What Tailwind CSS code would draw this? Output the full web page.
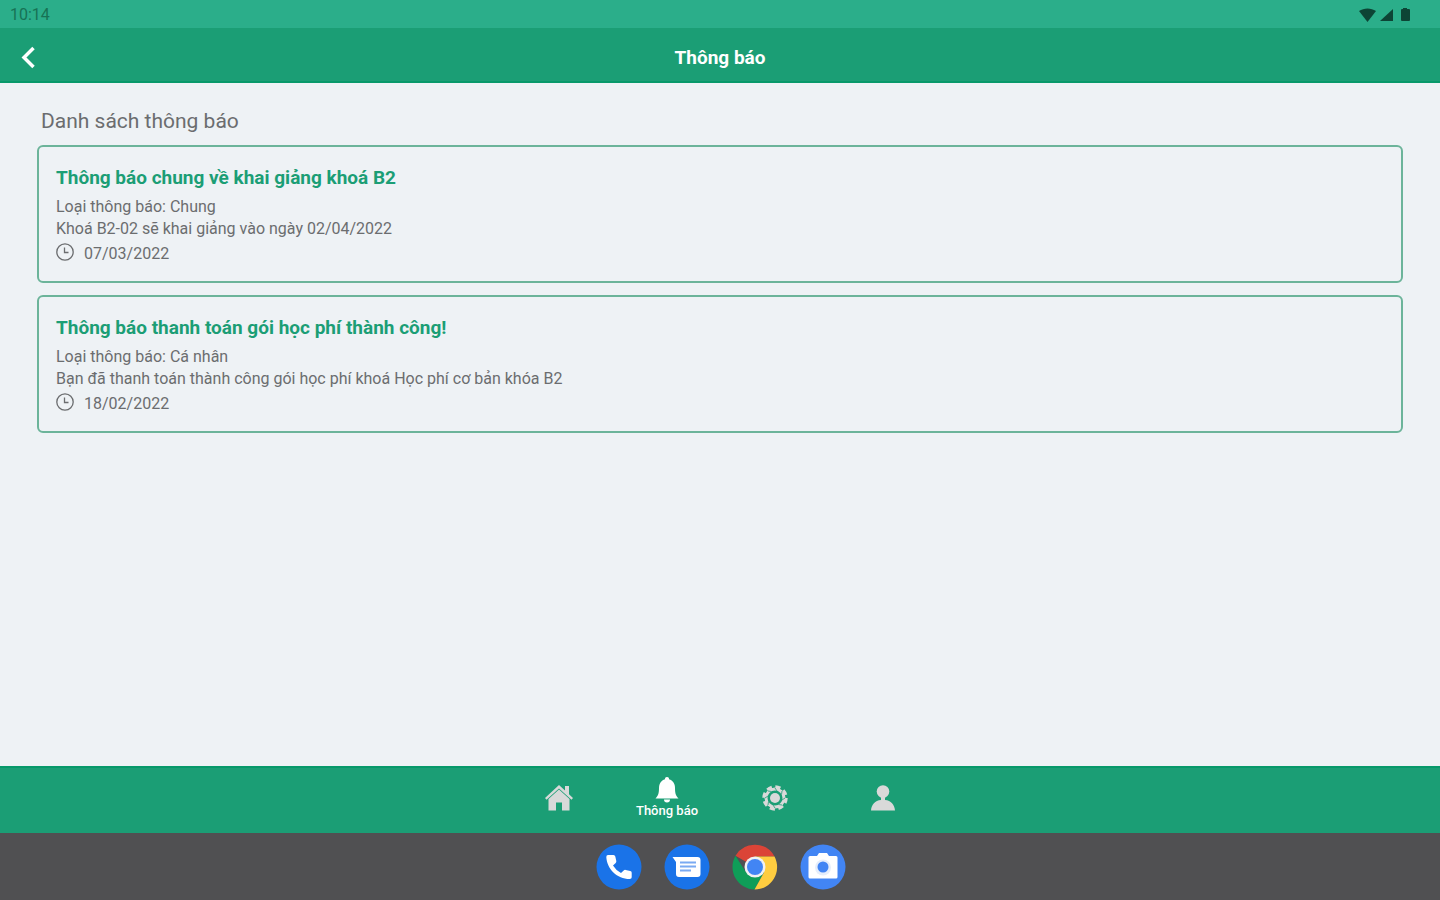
<!DOCTYPE html>
<html lang="vi">
<head>
    <meta charset="UTF-8">
    <meta name="viewport" content="width=device-width, initial-scale=1.0">
    <title>Thông báo</title>
    <script src="https://cdn.jsdelivr.net/npm/@tailwindcss/browser@4"></script>
</head>
<body class="min-h-screen flex flex-col bg-[#eef2f5] font-['Roboto',sans-serif] text-[#6b6d6f]">
    <!-- status bar -->
    <div class="h-7 flex items-center justify-between bg-[#2bae8a] pl-[10px] pr-[27px] pt-px text-[#177255]">
        <span class="text-base">10:14</span>
        <div class="flex items-center gap-1 text-[#0d4435]">
            <svg class="w-[17px] h-4" viewBox="0 0 17 16" fill="currentColor"><path d="M0 4C5 .5 12 .5 17 4L8.500 15z"/></svg>
            <svg class="w-[13px] h-4" viewBox="0 0 13 16" fill="currentColor"><path d="M13 2v12H0z"/></svg>
            <svg class="w-4 h-4" viewBox="0 0 16 16" fill="currentColor"><path d="M6 1h4v1h2q1 0 1 1v10q0 1-1 1H5q-1 0-1-1V3q0-1 1-1h1z"/></svg>
        </div>
    </div>

    <header class="h-[55px] grid grid-cols-3 items-center bg-[#1b9e75] border-b-2 border-[#07996a] px-4 pt-[7px] text-white">
        <button type="button" aria-label="Quay lại" class="w-6 h-10 flex items-center justify-center">
            <svg class="w-6 h-6" viewBox="0 0 24 24" fill="none" stroke="currentColor" stroke-width="3.500"><path d="M17.500 2L8 11.500L17.500 21"/></svg>
        </button>
        <h1 class="text-center text-[19px] font-bold">Thông báo</h1>
    </header>

    <main class="flex-1 px-[37px] pt-6">
        <h2 class="pl-1 text-[21px] leading-7 mb-[10px]">Danh sách thông báo</h2>
        <div class="space-y-3">
            <article class="border-2 border-[#6cb49a] rounded-md px-[17px] pt-[17px] pb-[13px]">
                <h3 class="text-[19px] leading-7 font-bold text-[#1b9e75] mb-1">Thông báo chung về khai giảng khoá B2</h3>
                <p class="text-base leading-[22px]">Loại thông báo: Chung</p>
                <p class="text-base leading-[22px]">Khoá B2-02 sẽ khai giảng vào ngày 02/04/2022</p>
                <div class="flex items-start gap-[10px] text-base leading-7">
                    <svg class="mt-[3px] w-[18px] h-[18px]" viewBox="0 0 18 18" fill="none" stroke="currentColor" stroke-width="1.300"><circle cx="9" cy="9" r="8.200"/><path d="M8.500 4.500V9.500H12.500"/></svg>
                    <time datetime="2022-03-07">07/03/2022</time>
                </div>
            </article>
            <article class="border-2 border-[#6cb49a] rounded-md px-[17px] pt-[17px] pb-[13px]">
                <h3 class="text-[19px] leading-7 font-bold text-[#1b9e75] mb-1">Thông báo thanh toán gói học phí thành công!</h3>
                <p class="text-base leading-[22px]">Loại thông báo: Cá nhân</p>
                <p class="text-base leading-[22px]">Bạn đã thanh toán thành công gói học phí khoá Học phí cơ bản khóa B2</p>
                <div class="flex items-start gap-[10px] text-base leading-7">
                    <svg class="mt-[3px] w-[18px] h-[18px]" viewBox="0 0 18 18" fill="none" stroke="currentColor" stroke-width="1.300"><circle cx="9" cy="9" r="8.200"/><path d="M8.500 4.500V9.500H12.500"/></svg>
                    <time datetime="2022-02-18">18/02/2022</time>
                </div>
            </article>
        </div>
    </main>

    <!-- tab bar -->
    <nav class="h-[67px] flex justify-center bg-[#1b9e75] border-t-2 border-[#07996a] pb-[6px] pl-[2px] text-[#d9d9d9]">
        <a href="#" aria-label="Trang chủ" class="w-27 flex items-center justify-center">
            <svg class="w-7 h-7" viewBox="0 0 28 28" fill="currentColor"><path d="M14 1L0 14l1.500 1.800L14 4.500l12.500 11.300L28 14l-4-3.800V2h-4v4.500z"/><path d="M14 5.500L3.500 15v11.500H11v-8h6v8h7.500V15z"/></svg>
        </a>
        <a href="#" class="w-27 flex flex-col items-center justify-center text-white">
            <svg class="w-6 h-[26px]" viewBox="0 0 24 26" fill="currentColor"><path d="M12 0a2 2 0 0 1 2 2.300C18 3.500 20 7 20 11c0 6 1 7.500 3.500 10.500H.500c2.500-3 3.500-4.500 3.500-10.500 0-4 2-7.500 6-8.700A2 2 0 0 1 12 0z"/><path d="M9 22.500h6a3 3 0 0 1-6 0z"/></svg>
            <span class="text-[13px] leading-4 font-medium">Thông báo</span>
        </a>
        <a href="#" aria-label="Cài đặt" class="w-27 flex items-center justify-center">
            <svg class="w-[26px] h-[26px]" viewBox="0 0 26 26" fill="none" stroke="currentColor"><circle cx="13" cy="13" r="9" stroke-width="3"/><circle cx="13" cy="13" r="11.200" stroke-width="3" stroke-dasharray="5.200 3.600"/><circle cx="13" cy="13" r="5" fill="currentColor" stroke="none"/><path stroke="#1b9e75" stroke-width=".8" d="M13 3l2 3M20 6l-.5 3.500M23 13l-3 2M20 20l-3.500-.5M13 23l-2-3M6 20l.5-3.500M3 13l3-2M6 6l3.500.5"/></svg>
        </a>
        <a href="#" aria-label="Tài khoản" class="w-27 flex items-center justify-center">
            <svg class="w-[26px] h-[26px]" viewBox="0 0 26 26" fill="currentColor"><circle cx="13" cy="6.500" r="6.300"/><path d="M11 11h4v4c6 .5 9.500 4.500 10 10.500H1C1.500 19.500 5 15.500 11 15z"/></svg>
        </a>
    </nav>

    <!-- dock -->
    <footer class="h-[67px] flex items-center justify-center gap-[22px] bg-[#505052] pl-px">
        <button type="button" aria-label="Điện thoại">
            <svg class="w-[46px] h-[46px]" viewBox="0 0 46 46"><circle cx="23" cy="23" r="22.500" fill="#1a73e8"/><path fill="#fff" d="M12 11h5.500q1.500 0 1.800 1.500l1 4.500q.2 1.200-.6 2l-2.700 2.500q3 5 8 7.500l2.700-2.600q.8-.8 2-.5l4.500 1q1.500.3 1.500 1.800v4.500q0 1.800-2 1.800C21 35 11 25 10.300 13q0-2 1.700-2z"/></svg>
        </button>
        <button type="button" aria-label="Tin nhắn">
            <svg class="w-[46px] h-[46px]" viewBox="0 0 46 46"><circle cx="23" cy="23" r="22.500" fill="#1a73e8"/><path fill="#fff" d="M8.500 13h25q3 0 3 3v14q0 3-3 3H15q-3 0-3-3V18z"/><path stroke="#7aaaf2" stroke-width="2" d="M16 18.500h16M16 22.500h16M16 26.500h11"/></svg>
        </button>
        <button type="button" aria-label="Chrome">
            <svg class="w-[46px] h-[46px]" viewBox="0 0 46 46"><path fill="#db4437" d="M23 23L3.500 11.750A22.500 22.500 0 0 1 42.500 12.500H23z"/><path fill="#0f9d58" d="M3.500 11.750A22.500 22.500 0 0 0 22.500 45.500L32 28.250L23 23L13.900 28.250z"/><path fill="#ffcd40" d="M23 12.500h19.500A22.500 22.500 0 0 1 22.500 45.500L32.100 28.250z"/><circle cx="23" cy="23" r="10.500" fill="#f1f1f1"/><circle cx="23" cy="23" r="8" fill="#4285f4"/></svg>
        </button>
        <button type="button" aria-label="Máy ảnh">
            <svg class="w-[46px] h-[46px]" viewBox="0 0 46 46"><circle cx="23" cy="23" r="22.500" fill="#4285f4"/><path fill="#fff" d="M10 12h7l2-3h8l2 3h7q1.500 0 1.500 1.500v19.500q0 1.500-1.500 1.500H10q-1.500 0-1.500-1.500v-19.500Q8.500 12 10 12z"/><circle cx="23" cy="23.500" r="8" fill="#e6eefb"/><circle cx="23" cy="23" r="5.500" fill="#4285f4"/></svg>
        </button>
    </footer>
</body>
</html>
